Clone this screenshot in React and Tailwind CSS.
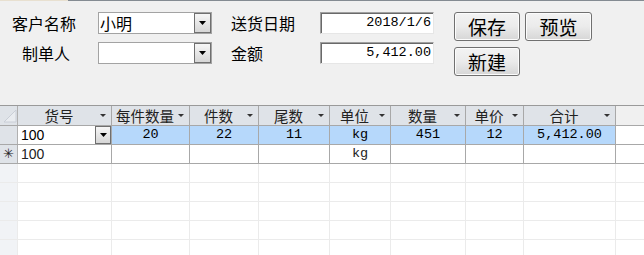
import React from "react";

const CJK = { fontFamily: '"Noto Sans CJK SC", "Noto Sans", sans-serif' };

function Tri({ className = "" }) {
  return (
    <svg width="7" height="4" viewBox="0 0 7 4" className={className}>
      <path d="M0 0H7L3.5 4Z" fill="currentColor" />
    </svg>
  );
}

function SmallTri() {
  return (
    <svg width="6" height="3" viewBox="0 0 6 3" className="text-[#333] mr-[5px] shrink-0">
      <path d="M0 0H6L3 3Z" fill="currentColor" />
    </svg>
  );
}

function Combo({ text }) {
  return (
    <div className="w-[114px] h-[22px] border border-[#a3a3a3] bg-white flex items-center">
      <div className="flex-1 pl-[1px] text-[16px] leading-[20px] text-black font-['Noto_Sans_CJK_SC',sans-serif]">{text}</div>
      <div className="w-[17px] h-[20px] border border-[#6f6f6f] bg-linear-to-b from-[#f6f6f6] to-[#d6d6d6] flex items-center justify-center">
        <Tri className="text-black" />
      </div>
    </div>
  );
}

function TextBox({ text }) {
  return (
    <div className="w-[114px] h-[22px] border border-[#a0a0a0] border-r-[#e6e6e6] border-b-[#e6e6e6] shadow-[inset_1px_1px_0_#696969] bg-white flex items-center justify-end pr-[2px] text-[13.5px] leading-[20px] text-black font-['Liberation_Mono',monospace]">
      {text}
    </div>
  );
}

function Btn({ text, w }) {
  return (
    <div
      className={`${w} h-[29px] border border-[#707070] rounded-[3px] bg-linear-to-b from-[#f3f3f3] via-[#ebebeb] to-[#d6d6d6] flex items-center justify-center text-[19px] leading-[27px] text-black font-['Noto_Sans_CJK_SC',sans-serif] shadow-[inset_0_0_0_1px_#fcfcfc]`}
    >
      {text}
    </div>
  );
}

const cols = [
  { w: "w-[94px]", h: "货号" },
  { w: "w-[78px]", h: "每件数量" },
  { w: "w-[69px]", h: "件数" },
  { w: "w-[71px]", h: "尾数" },
  { w: "w-[61px]", h: "单位" },
  { w: "w-[75px]", h: "数量" },
  { w: "w-[58px]", h: "单价" },
  { w: "w-[92px]", h: "合计" },
];

const row1 = ["20", "22", "11", "kg", "451", "12", "5,412.00"];

export default function App() {
  return (
    <div className="w-[644px] h-[255px] bg-[#f0f0f0] overflow-hidden" style={CJK}>
      {/* top line */}
      <div className="flex h-px">
        <div className="w-[68px] bg-[#e8e0d0]" />
        <div className="flex-1 bg-[#848b92]" />
      </div>

      {/* form */}
      <div className="h-[104px] flex pt-[11px] text-black">
        <div className="ml-[12px] flex flex-col gap-[8px]">
          <div className="flex items-center h-[22px]">
            <div className="w-[86px] text-[16px] leading-[20px]">客户名称</div>
            <Combo text="小明" />
          </div>
          <div className="flex items-center h-[22px]">
            <div className="w-[86px] pl-[10px] text-[16px] leading-[20px]">制单人</div>
            <Combo text="" />
          </div>
        </div>
        <div className="ml-[19px] flex flex-col gap-[8px]">
          <div className="flex items-center h-[22px]">
            <div className="w-[89px] text-[16px] leading-[20px]">送货日期</div>
            <TextBox text="2018/1/6" />
          </div>
          <div className="flex items-center h-[22px]">
            <div className="w-[89px] text-[16px] leading-[20px]">金额</div>
            <TextBox text="5,412.00" />
          </div>
        </div>
        <div className="ml-[20px] flex flex-col gap-[6px]">
          <div className="flex gap-[5px]">
            <Btn text="保存" w="w-[66px]" />
            <Btn text="预览" w="w-[67px]" />
          </div>
          <Btn text="新建" w="w-[66px]" />
        </div>
      </div>

      {/* grid */}
      <div className="bg-white h-[150px]">
        {/* header */}
        <div className="flex h-[21px] border-t border-b border-t-[#9a9a9a] border-b-[#a8a8a8] bg-[#f0f0f0]">
          <div className="w-[18px] border-r border-[#b0b0b0] bg-[#dfe3e8] relative">
            <svg width="14" height="14" viewBox="0 0 14 14" className="absolute left-[3px] top-[3px]">
              <path d="M13 1V13H1Z" fill="#e9ecf0" stroke="#c9ced6" strokeWidth="1" />
            </svg>
          </div>
          {cols.map((c) => (
            <div key={c.h} className={`${c.w} border-r border-[#a8a8a8] bg-[#dfe3e8] flex items-center text-[14.5px] leading-[19px] text-[#222] whitespace-nowrap`}>
              <div className="flex-1 text-center">{c.h}</div>
              <SmallTri />
            </div>
          ))}
          <div className="flex-1" />
        </div>

        {/* row 1 */}
        <div className="flex h-[19px] border-b border-[#a8a8a8]">
          <div className="w-[18px] border-r border-[#b0b0b0] bg-[#dfe3e8]" />
          <div className="w-[94px] border-r border-[#a8a8a8] bg-white flex items-center">
            <div className="flex-1 pl-[3px] text-[14px] leading-[18px] font-['Liberation_Sans',sans-serif]">100</div>
            <div className="w-[16px] h-[18px] border border-[#6f6f6f] bg-linear-to-b from-[#f6f6f6] to-[#d6d6d6] flex items-center justify-center">
              <Tri className="text-black" />
            </div>
          </div>
          {cols.slice(1).map((c, i) => (
            <div key={c.h} className={`${c.w} border-r border-[#a8a8a8] bg-[#b6d8fb] flex items-center justify-center text-[13.5px] leading-[18px] text-black font-['Liberation_Mono',monospace]`}>
              {row1[i]}
            </div>
          ))}
          <div className="flex-1 bg-white" />
        </div>

        {/* row 2 (new) */}
        <div className="flex h-[19px] border-b border-[#a8a8a8]">
          <div className="w-[18px] border-r border-[#b0b0b0] bg-[#dfe3e8] flex items-center justify-center text-[13px] leading-[18px] text-[#222] font-['DejaVu_Sans',sans-serif]">
            ✳
          </div>
          <div className="w-[94px] border-r border-[#a8a8a8] flex items-center pl-[3px] text-[14px] leading-[18px] text-[#222] font-['Liberation_Sans',sans-serif]">
            100
          </div>
          {cols.slice(1).map((c, i) => (
            <div key={c.h} className={`${c.w} border-r border-[#a8a8a8] flex items-center justify-center text-[13.5px] leading-[18px] text-[#222] font-['Liberation_Mono',monospace]`}>
              {i === 3 ? "kg" : ""}
            </div>
          ))}
          <div className="flex-1" />
        </div>

        {/* empty rows */}
        {[0, 1, 2, 3, 4].map((r) => (
          <div key={r} className="flex h-[19px] border-b border-[#ebebeb]">
            <div className="w-[18px] border-r border-[#ebebeb] bg-[#f1f3f6]" />
            {cols.map((c) => (
              <div key={c.h} className={`${c.w} border-r border-[#ebebeb]`} />
            ))}
            <div className="flex-1" />
          </div>
        ))}
      </div>
    </div>
  );
}
